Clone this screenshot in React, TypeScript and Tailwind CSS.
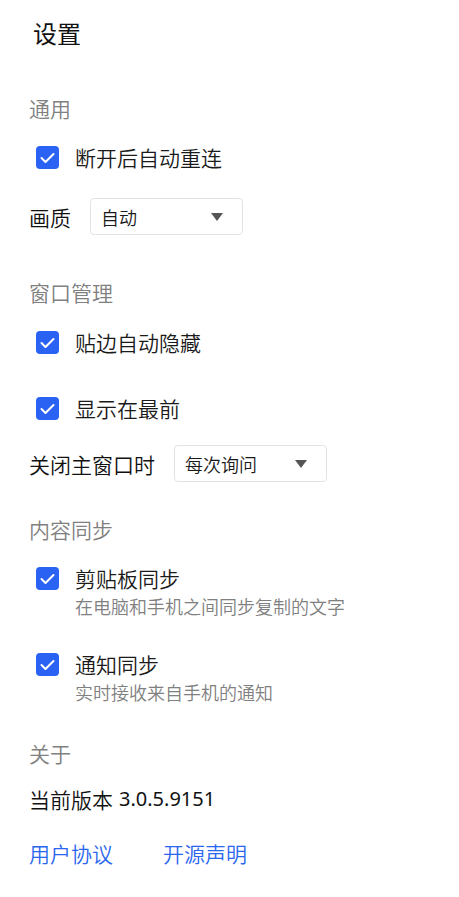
import React from "react";

const FONT = { fontFamily: '"Noto Sans CJK SC", "Noto Sans", sans-serif' };

function Check() {
  return (
    <div className="w-[23px] h-[23px] rounded-[4px] bg-[#2a63f4] flex-none flex items-center justify-center">
      <svg width="23" height="23" viewBox="0 0 23 23" fill="none">
        <polyline points="5.5,12 9.5,16 17.5,8" stroke="#ffffff" strokeWidth="2" strokeLinecap="round" strokeLinejoin="round" />
      </svg>
    </div>
  );
}

function Select({ value }: { value: string }) {
  return (
    <div className="w-[153px] h-[37px] border border-[#e3e3e3] rounded-[4px] bg-white flex items-center justify-between pl-[10px] pr-[19px]">
      <span className="text-[18px] leading-[26px] text-[#1a1a1a]">{value}</span>
      <svg width="12" height="8" viewBox="0 0 12 8">
        <polygon points="0,0 12,0 6,8" fill="#555555" />
      </svg>
    </div>
  );
}

function Section({ title, mt }: { title: string; mt: string }) {
  return (
    <div className={`${mt} h-[30px] flex items-center pl-[29px] text-[21px] leading-[30px] text-[#808080]`}>
      {title}
    </div>
  );
}

export default function App() {
  return (
    <div className="w-[459px] h-[897px] bg-white flex flex-col font-[350]" style={FONT}>
      <div className="mt-[13px] h-[40px] flex items-center pl-[33px] text-[24px] leading-[40px] text-[#111] font-normal">
        设置
      </div>

      <Section title="通用" mt="mt-[40px]" />
      <div className="mt-[19px] h-[30px] flex items-center pl-[36px] gap-[16px]">
        <Check />
        <span className="text-[21px] leading-[30px] text-[#1a1a1a]">断开后自动重连</span>
      </div>
      <div className="mt-[26px] h-[37px] flex items-center pl-[29px] gap-[19px]">
        <span className="text-[21px] leading-[30px] text-[#111]">画质</span>
        <Select value="自动" />
      </div>

      <Section title="窗口管理" mt="mt-[42px]" />
      <div className="mt-[20px] h-[30px] flex items-center pl-[36px] gap-[16px]">
        <Check />
        <span className="text-[21px] leading-[30px] text-[#1a1a1a]">贴边自动隐藏</span>
      </div>
      <div className="mt-[36px] h-[30px] flex items-center pl-[36px] gap-[16px]">
        <Check />
        <span className="text-[21px] leading-[30px] text-[#1a1a1a]">显示在最前</span>
      </div>
      <div className="mt-[22px] h-[37px] flex items-center pl-[29px] gap-[19px]">
        <span className="text-[21px] leading-[30px] text-[#111]">关闭主窗口时</span>
        <Select value="每次询问" />
      </div>

      <Section title="内容同步" mt="mt-[32px]" />
      <div className="mt-[19px] flex flex-col">
        <div className="h-[30px] flex items-center pl-[36px] gap-[16px]">
          <Check />
          <span className="text-[21px] leading-[30px] text-[#1a1a1a]">剪贴板同步</span>
        </div>
        <div className="h-[26px] flex items-center pl-[75px] text-[18px] leading-[26px] text-[#808080]">
          在电脑和手机之间同步复制的文字
        </div>
      </div>
      <div className="mt-[30px] flex flex-col">
        <div className="h-[30px] flex items-center pl-[36px] gap-[16px]">
          <Check />
          <span className="text-[21px] leading-[30px] text-[#1a1a1a]">通知同步</span>
        </div>
        <div className="h-[26px] flex items-center pl-[75px] text-[18px] leading-[26px] text-[#808080]">
          实时接收来自手机的通知
        </div>
      </div>

      <Section title="关于" mt="mt-[33px]" />
      <div className="mt-[16px] h-[30px] flex items-center pl-[29px] text-[21px] leading-[30px] text-[#111]">
        <span>当前版本</span>
        <span className="ml-[6px] text-[20px] font-normal font-['Noto_Sans',sans-serif]">3.0.5.9151</span>
      </div>
      <div className="mt-[24px] h-[30px] flex items-center pl-[29px] gap-[50px] text-[21px] leading-[30px] text-[#2a66ee]">
        <span>用户协议</span>
        <span>开源声明</span>
      </div>
    </div>
  );
}
